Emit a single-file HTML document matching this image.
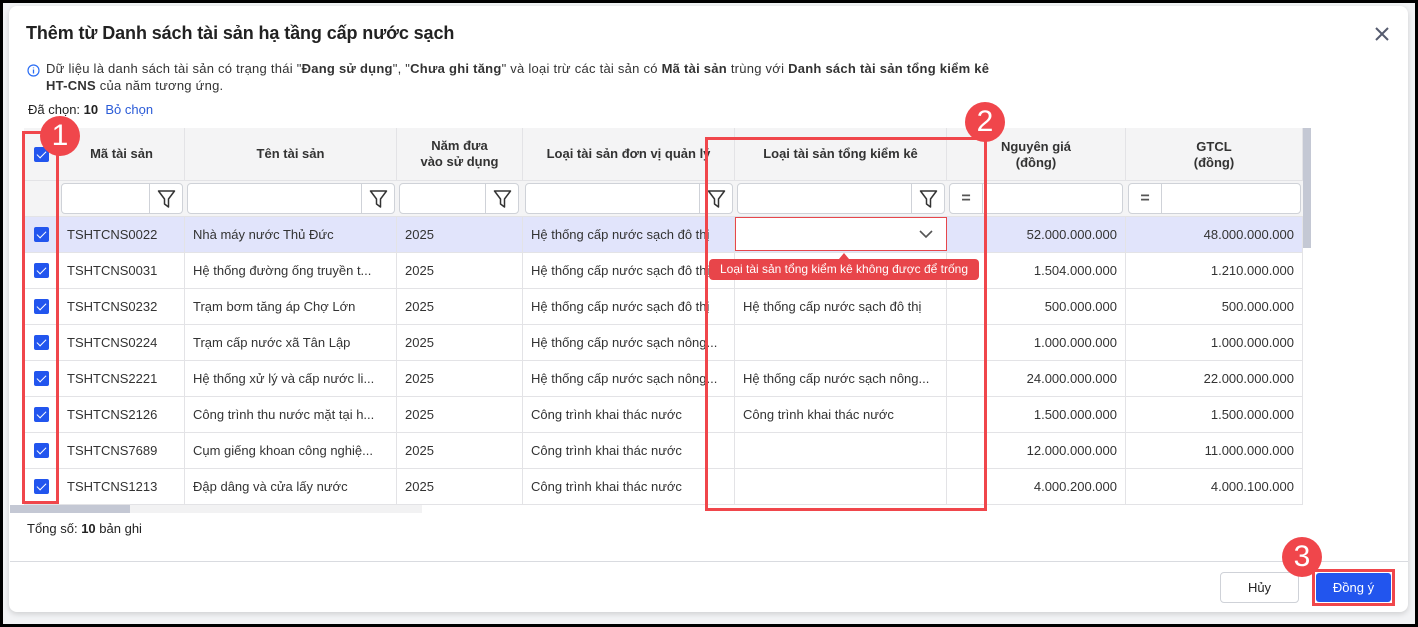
<!DOCTYPE html><html><head><meta charset="utf-8"><style>
*{box-sizing:border-box;margin:0;padding:0}
body{width:1418px;height:627px;background:#000;font-family:"Liberation Sans",sans-serif;font-size:13px;color:#222;position:relative;overflow:hidden}
.bg{position:absolute;left:3px;top:3px;width:1412px;height:621px;background:#f2f3f5}
.dlg{position:absolute;left:9px;top:6px;width:1399px;height:606px;background:#fff;border-radius:8px;box-shadow:0 2px 6px rgba(0,0,0,.15)}
.a{position:absolute}
.t{white-space:nowrap}
.hd{background:#f4f4f5;font-weight:bold;color:#333;text-align:center;display:flex;align-items:center;justify-content:center;line-height:16px;border-right:1px solid #e3e3e6;border-bottom:1px solid #e3e3e6}
.cell{position:absolute;height:36px;line-height:36px;border-right:1px solid #e3e3e6;border-bottom:1px solid #e3e3e6;padding:0 8px;white-space:nowrap;overflow:hidden;font-size:13px;color:#333}
.r{text-align:right}
.cb{position:absolute;width:15px;height:15px;background:#2255ee;border-radius:2px}
.cb:after{content:"";position:absolute;left:5px;top:2px;width:4px;height:8px;border:solid #fff;border-width:0 1.5px 1.5px 0;transform:rotate(45deg)}
.inp{position:absolute;height:31px;border:1px solid #cfd2d8;border-radius:4px;background:#fff}
.fic{position:absolute;right:0;top:0;width:33px;height:29px;border-left:1px solid #cfd2d8}
.eq{position:absolute;left:0;top:0;width:33px;height:29px;border-right:1px solid #cfd2d8;text-align:center;line-height:29px;font-weight:bold;font-size:16px;color:#555}
.red{position:absolute;border:3px solid #f0464b}
.badge{position:absolute;width:40px;height:40px;border-radius:50%;background:#f0464b;color:#fff;font-size:30px;text-align:center;line-height:40px}
</style></head><body>
<div class="bg"></div>
<div class="dlg"></div>
<div class="a t" style="left:26px;top:23px;font-size:18px;font-weight:bold;color:#222;letter-spacing:-0.1px">Thêm từ Danh sách tài sản hạ tầng cấp nước sạch</div>
<svg class="a" style="left:1374px;top:26px" width="16" height="16"><path d="M2 2L14 14M14 2L2 14" stroke="#555b6e" stroke-width="2"/></svg>
<svg class="a" style="left:27px;top:64px" width="13" height="13"><circle cx="6.5" cy="6.5" r="5.5" fill="none" stroke="#2a6df4" stroke-width="1.2"/><path d="M6.5 5.5v4M6.5 3.5v.8" stroke="#2a6df4" stroke-width="1.3"/></svg>
<div class="a" style="left:46px;top:60px;font-size:13px;line-height:17px;color:#333;letter-spacing:0.25px;white-space:nowrap">Dữ liệu là danh sách tài sản có trạng thái "<b>Đang sử dụng</b>", "<b>Chưa ghi tăng</b>" và loại trừ các tài sản có <b>Mã tài sản</b> trùng với <b>Danh sách tài sản tổng kiểm kê</b><br><b>HT-CNS</b> của năm tương ứng.</div>
<div class="a t" style="left:28px;top:102px;font-size:13px">Đã chọn: <b>10</b> &nbsp;<span style="color:#2a5bd7">Bỏ chọn</span></div>

<div class="a hd" style="left:24px;top:128px;width:35px;height:53px"></div>
<div class="a hd" style="left:59px;top:128px;width:126px;height:53px">Mã tài sản</div>
<div class="a hd" style="left:185px;top:128px;width:212px;height:53px">Tên tài sản</div>
<div class="a hd" style="left:397px;top:128px;width:126px;height:53px">Năm đưa<br>vào sử dụng</div>
<div class="a hd" style="left:523px;top:128px;width:212px;height:53px">Loại tài sản đơn vị quản lý</div>
<div class="a hd" style="left:735px;top:128px;width:212px;height:53px">Loại tài sản tổng kiểm kê</div>
<div class="a hd" style="left:947px;top:128px;width:179px;height:53px;align-items:flex-start;padding-top:11px">Nguyên giá<br>(đồng)</div>
<div class="a hd" style="left:1126px;top:128px;width:177px;height:53px;align-items:flex-start;padding-top:11px">GTCL<br>(đồng)</div>
<div class="a" style="left:1303px;top:128px;width:8px;height:120px;background:#c4c8d4"></div>
<div class="a" style="left:24px;top:181px;width:1279px;height:36px;background:#f4f4f5;border-bottom:1px solid #e3e3e6"></div>
<div class="cb" style="left:34px;top:147px"></div>

<div id="filters"></div>
<div id="rows"></div>
<div class="a" style="left:10px;top:505px;width:412px;height:8px;background:#f2f2f3"></div>
<div class="a" style="left:10px;top:505px;width:120px;height:8px;background:#c4c8d4"></div>
<div class="a t" style="left:27px;top:521px">Tổng số: <b>10</b> bản ghi</div>
<div class="a" style="left:10px;top:561px;width:1398px;height:1px;background:#d9dbe0"></div>
<div class="a" style="left:1220px;top:572px;width:79px;height:31px;border:1px solid #cfd2d8;border-radius:4px;text-align:center;line-height:29px">Hủy</div>
<div class="a" style="left:1316px;top:573px;width:75px;height:29px;background:#2255ee;border-radius:3px;color:#fff;text-align:center;line-height:29px">Đồng ý</div>

<div class="red" style="left:22px;top:131px;width:37px;height:373px"></div>
<div class="badge" style="left:40px;top:116px">1</div>
<div class="red" style="left:705px;top:137px;width:282px;height:374px"></div>
<div class="badge" style="left:965px;top:102px">2</div>
<div class="red" style="left:1312px;top:569px;width:83px;height:37px"></div>
<div class="badge" style="left:1282px;top:537px">3</div>

<div class="a" style="left:735px;top:217px;width:212px;height:34px;border:1px solid #e6474c;background:#fff"></div>
<svg class="a" style="left:918px;top:229px" width="16" height="10"><path d="M2 2L8 8L14 2" fill="none" stroke="#555" stroke-width="1.6"/></svg>
<div class="a" style="left:709px;top:259px;width:270px;height:21px;background:#e8454a;border-radius:4px;color:#fff;font-size:12px;line-height:21px;text-align:center">Loại tài sản tổng kiểm kê không được để trống</div>
<div class="a" style="left:839px;top:253px;width:0;height:0;border-left:5px solid transparent;border-right:5px solid transparent;border-bottom:6px solid #e8454a"></div>

<script>
var f='',fl=[[61,122],[187,208],[399,120],[525,208],[737,208]];
fl.forEach(function(a){f+='<div class="inp" style="left:'+a[0]+'px;top:183px;width:'+a[1]+'px"><div class="fic"><svg width="33" height="29"><path d="M8.5 7h16l-6 8v8l-4-3v-5z" fill="none" stroke="#333" stroke-width="1.5" stroke-linejoin="round"/></svg></div></div>';});
[[949,174],[1128,173]].forEach(function(a){f+='<div class="inp" style="left:'+a[0]+'px;top:183px;width:'+a[1]+'px"><div class="eq">=</div></div>';});
document.getElementById('filters').innerHTML=f;
var d=[["TSHTCNS0022","Nhà máy nước Thủ Đức","Hệ thống cấp nước sạch đô thị","","52.000.000.000","48.000.000.000"],
["TSHTCNS0031","Hệ thống đường ống truyền t...","Hệ thống cấp nước sạch đô thị","","1.504.000.000","1.210.000.000"],
["TSHTCNS0232","Trạm bơm tăng áp Chợ Lớn","Hệ thống cấp nước sạch đô thị","Hệ thống cấp nước sạch đô thị","500.000.000","500.000.000"],
["TSHTCNS0224","Trạm cấp nước xã Tân Lập","Hệ thống cấp nước sạch nông...","","1.000.000.000","1.000.000.000"],
["TSHTCNS2221","Hệ thống xử lý và cấp nước li...","Hệ thống cấp nước sạch nông...","Hệ thống cấp nước sạch nông...","24.000.000.000","22.000.000.000"],
["TSHTCNS2126","Công trình thu nước mặt tại h...","Công trình khai thác nước","Công trình khai thác nước","1.500.000.000","1.500.000.000"],
["TSHTCNS7689","Cụm giếng khoan công nghiệ...","Công trình khai thác nước","","12.000.000.000","11.000.000.000"],
["TSHTCNS1213","Đập dâng và cửa lấy nước","Công trình khai thác nước","","4.000.200.000","4.000.100.000"]];
var h='';
d.forEach(function(r,i){var y=217+i*36,bg=i==0?'#e1e4fb':'#fff';
var cols=[[24,35,''],[59,126,r[0]],[185,212,r[1]],[397,126,'2025'],[523,212,r[2]],[735,212,r[3]],[947,179,r[4],1],[1126,177,r[5],1]];
cols.forEach(function(c){h+='<div class="cell'+(c[3]?' r':'')+'" style="left:'+c[0]+'px;top:'+y+'px;width:'+c[1]+'px;background:'+bg+'">'+c[2]+'</div>';});
h+='<div class="cb" style="left:34px;top:'+(y+10)+'px"></div>';});
document.getElementById('rows').innerHTML=h;
</script>
</body></html>
